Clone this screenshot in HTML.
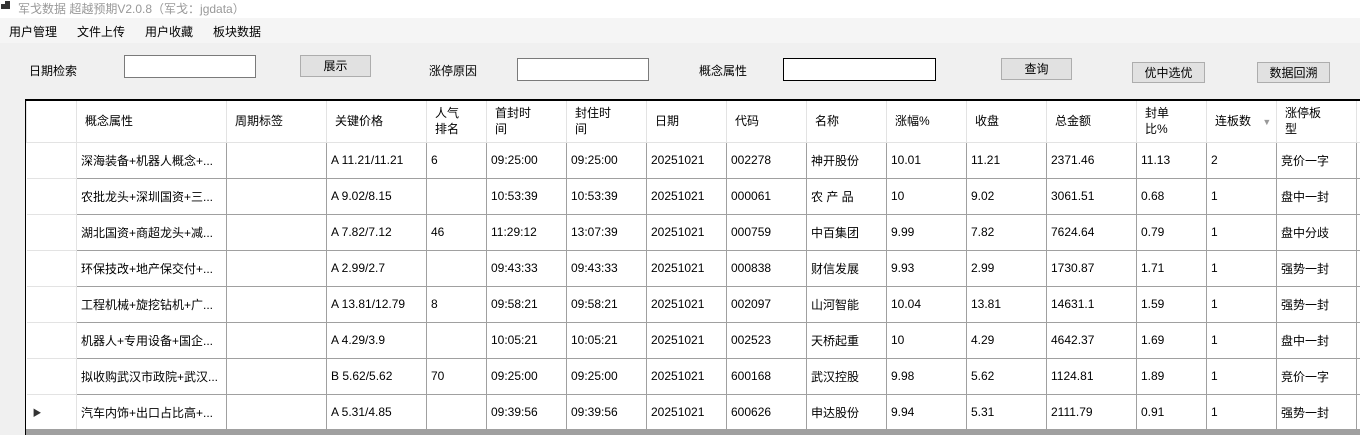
<!DOCTYPE html>
<html><head><meta charset="utf-8"><style>
*{margin:0;padding:0;box-sizing:border-box}
body{width:1360px;height:435px;overflow:hidden;background:#f0f0f0;font-family:"Liberation Sans","Noto Sans CJK SC",sans-serif;font-size:12px;color:#000;position:relative}
.a{position:absolute;white-space:nowrap}
.inp{position:absolute;background:#fff;border:1px solid #7a7a7a}
.btn{position:absolute;background:#e1e1e1;border:1px solid #adadad;text-align:center;font-size:12px}
table{border-collapse:collapse;table-layout:fixed;position:absolute;left:26px;top:101px;background:#fff;width:1340px}
td{border:1px solid #a0a0a0;height:36px;padding:0 0 0 4px;white-space:nowrap;overflow:hidden;font-size:12px}
tr.h td{height:41px;border-color:#e3e3e3;border-top:none;padding-left:8px;line-height:16px}
td.rh{border-color:#e3e3e3;border-left:none}
</style></head><body>
<div class="a" style="left:0;top:0;width:1360px;height:18px;background:#fff"></div>
<div class="a" style="left:1px;top:4px;width:5px;height:5px;background:#333"></div>
<div class="a" style="left:5px;top:1px;width:5px;height:8px;background:#333"></div>
<div class="a" style="left:18px;top:0;color:#999;font-size:12px">军戈数据 超越预期V2.0.8（军戈：jgdata）</div>
<div class="a" style="left:0;top:18px;width:1360px;height:25px;background:#f5f5f5"></div>
<div class="a" style="left:9px;top:23px">用户管理</div>
<div class="a" style="left:77px;top:23px">文件上传</div>
<div class="a" style="left:145px;top:23px">用户收藏</div>
<div class="a" style="left:213px;top:23px">板块数据</div>

<div class="a" style="left:29px;top:62px">日期检索</div>
<div class="inp" style="left:124px;top:55px;width:132px;height:23px"></div>
<div class="btn" style="left:300px;top:55px;width:71px;height:22px;line-height:20px">展示</div>
<div class="a" style="left:429px;top:62px">涨停原因</div>
<div class="inp" style="left:517px;top:58px;width:132px;height:23px"></div>
<div class="a" style="left:699px;top:62px">概念属性</div>
<div class="inp" style="left:783px;top:58px;width:153px;height:23px;border-color:#000"></div>
<div class="btn" style="left:1001px;top:58px;width:71px;height:22px;line-height:20px">查询</div>
<div class="btn" style="left:1132px;top:62px;width:73px;height:21px;line-height:21px">优中选优</div>
<div class="btn" style="left:1257px;top:62px;width:73px;height:21px;line-height:21px">数据回溯</div>

<div class="a" style="left:25px;top:99px;width:1335px;height:336px;border:1px solid #000;border-top:2px solid #000;background:#fff"></div>
<table>
<colgroup><col style="width:50px"><col style="width:150px"><col style="width:100px"><col style="width:100px"><col style="width:60px"><col style="width:80px"><col style="width:80px"><col style="width:80px"><col style="width:80px"><col style="width:80px"><col style="width:80px"><col style="width:80px"><col style="width:90px"><col style="width:70px"><col style="width:70px"><col style="width:80px"><col style="width:10px"></colgroup>
<tr class="h"><td></td><td>概念属性</td><td>周期标签</td><td>关键价格</td><td>人气<br>排名</td><td>首封时<br>间</td><td>封住时<br>间</td><td>日期</td><td>代码</td><td>名称</td><td>涨幅%</td><td>收盘</td><td>总金额</td><td>封单<br>比%</td><td>连板数 <span style="color:#999;font-size:9px;margin-left:8px">▼</span></td><td>涨停板<br>型</td><td></td></tr>
<tr><td class="rh"></td><td>深海装备+机器人概念+...</td><td></td><td>A 11.21/11.21</td><td>6</td><td>09:25:00</td><td>09:25:00</td><td>20251021</td><td>002278</td><td>神开股份</td><td>10.01</td><td>11.21</td><td>2371.46</td><td>11.13</td><td>2</td><td>竞价一字</td><td></td></tr>
<tr><td class="rh"></td><td>农批龙头+深圳国资+三...</td><td></td><td>A 9.02/8.15</td><td></td><td>10:53:39</td><td>10:53:39</td><td>20251021</td><td>000061</td><td>农 产 品</td><td>10</td><td>9.02</td><td>3061.51</td><td>0.68</td><td>1</td><td>盘中一封</td><td></td></tr>
<tr><td class="rh"></td><td>湖北国资+商超龙头+减...</td><td></td><td>A 7.82/7.12</td><td>46</td><td>11:29:12</td><td>13:07:39</td><td>20251021</td><td>000759</td><td>中百集团</td><td>9.99</td><td>7.82</td><td>7624.64</td><td>0.79</td><td>1</td><td>盘中分歧</td><td></td></tr>
<tr><td class="rh"></td><td>环保技改+地产保交付+...</td><td></td><td>A 2.99/2.7</td><td></td><td>09:43:33</td><td>09:43:33</td><td>20251021</td><td>000838</td><td>财信发展</td><td>9.93</td><td>2.99</td><td>1730.87</td><td>1.71</td><td>1</td><td>强势一封</td><td></td></tr>
<tr><td class="rh"></td><td>工程机械+旋挖钻机+广...</td><td></td><td>A 13.81/12.79</td><td>8</td><td>09:58:21</td><td>09:58:21</td><td>20251021</td><td>002097</td><td>山河智能</td><td>10.04</td><td>13.81</td><td>14631.1</td><td>1.59</td><td>1</td><td>强势一封</td><td></td></tr>
<tr><td class="rh"></td><td>机器人+专用设备+国企...</td><td></td><td>A 4.29/3.9</td><td></td><td>10:05:21</td><td>10:05:21</td><td>20251021</td><td>002523</td><td>天桥起重</td><td>10</td><td>4.29</td><td>4642.37</td><td>1.69</td><td>1</td><td>盘中一封</td><td></td></tr>
<tr><td class="rh"></td><td>拟收购武汉市政院+武汉...</td><td></td><td>B 5.62/5.62</td><td>70</td><td>09:25:00</td><td>09:25:00</td><td>20251021</td><td>600168</td><td>武汉控股</td><td>9.98</td><td>5.62</td><td>1124.81</td><td>1.89</td><td>1</td><td>竞价一字</td><td></td></tr>
<tr><td class="rh" style="padding-left:6px;font-size:9px;color:#333">▶</td><td>汽车内饰+出口占比高+...</td><td></td><td>A 5.31/4.85</td><td></td><td>09:39:56</td><td>09:39:56</td><td>20251021</td><td>600626</td><td>申达股份</td><td>9.94</td><td>5.31</td><td>2111.79</td><td>0.91</td><td>1</td><td>强势一封</td><td></td></tr>
</table>
<div class="a" style="left:26px;top:429px;width:1334px;height:6px;background:#a0a0a0"></div>
</body></html>
